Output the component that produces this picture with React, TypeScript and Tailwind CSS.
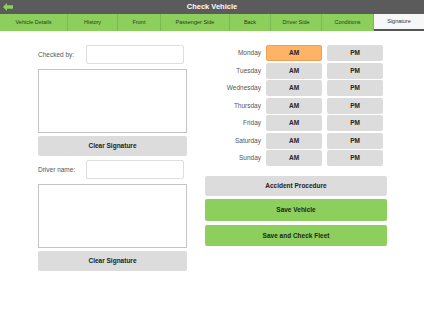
const tabs = [
  { label: 'Vehicle Details', w: 'w-[68px]' },
  { label: 'History', w: 'w-[50px]' },
  { label: 'Front', w: 'w-[43px]' },
  { label: 'Passenger Side', w: 'w-[69px]' },
  { label: 'Back', w: 'w-[41px]' },
  { label: 'Driver Side', w: 'w-[51px]' },
  { label: 'Conditions', w: 'w-[52px]' },
];

const days = ['Monday', 'Tuesday', 'Wednesday', 'Thursday', 'Friday', 'Saturday', 'Sunday'];

const SignatureBlock = ({ label, top }: { label: string; top: string }) => (
  <div className={`flex flex-col ${top}`}>
    <div className="flex items-center h-[19px]">
      <span className="w-[48px] text-[6.5px] text-[#555]">{label}</span>
      <div className="w-[98px] h-[19px] border border-[#dedede] rounded-[2px] bg-white" />
    </div>
    {/* signature pad */}
    <div className="mt-[5px] w-[149px] h-[64px] border border-[#c4c4c4] bg-white" />
    <button className="mt-[3px] w-[149px] h-[20px] rounded-[2px] bg-[#dcdcdc] text-[6.5px] font-bold text-[#222]">
      Clear Signature
    </button>
  </div>
);

export default function App() {
  return (
    <div className="w-[424px] h-[310px] bg-white overflow-hidden" style={{ fontFamily: '"Liberation Sans", Arial, sans-serif' }}>
      {/* Title bar */}
      <div className="relative h-[14px] bg-[#5b5b5b] flex items-center justify-center">
        <svg className="absolute left-[3px] top-[3px]" width="10" height="8" viewBox="0 0 10 8">
          <path d="M0 4 L4 0 L4 2.3 L10 2.3 L10 5.7 L4 5.7 L4 8 Z" fill="#8dd05c" />
        </svg>
        <span className="text-[7.5px] font-bold text-white">Check Vehicle</span>
      </div>

      {/* Tabs */}
      <div className="flex h-[17px] bg-[#8ccf5c]">
        {tabs.map((t) => (
          <div
            key={t.label}
            className={`${t.w} h-full flex items-center justify-center border-r border-[#7cba50] text-[5.5px] text-[#2a3a20]`}
          >
            {t.label}
          </div>
        ))}
        <div className="flex-1 h-full flex items-center justify-center bg-[#f7f7f7] border-b-2 border-[#555] text-[5.5px] text-[#333]">
          Signature
        </div>
      </div>

      <div className="flex pl-[38px] pt-[14px] gap-[18px]">
        {/* Left column */}
        <div className="flex flex-col">
          <SignatureBlock label="Checked by:" top="" />
          <SignatureBlock label="Driver name:" top="mt-[4px]" />
        </div>

        {/* Right column */}
        <div className="flex flex-col w-[182px] mt-[0px]">
          <div className="flex flex-col gap-[1.5px]">
            {days.map((d, i) => (
              <div key={d} className="flex items-center gap-[5px]">
                <span className="w-[56px] text-right text-[6.5px] text-[#555]">{d}</span>
                <button
                  className={`w-[56px] h-[16px] rounded-[2px] text-[6.5px] font-bold text-[#222] ${
                    i === 0 ? 'bg-[#ffb366] border border-[#f0a050]' : 'bg-[#dcdcdc]'
                  }`}
                >
                  AM
                </button>
                <button className="w-[56px] h-[16px] rounded-[2px] bg-[#dcdcdc] text-[6.5px] font-bold text-[#222]">
                  PM
                </button>
              </div>
            ))}
          </div>
          <button className="mt-[10px] h-[20px] rounded-[2px] bg-[#dcdcdc] text-[6.5px] font-bold text-[#222]">
            Accident Procedure
          </button>
          <button className="mt-[3px] h-[22px] rounded-[2px] bg-[#8ccf5c] text-[6.5px] font-bold text-[#222]">
            Save Vehicle
          </button>
          <button className="mt-[4px] h-[21px] rounded-[2px] bg-[#8ccf5c] text-[6.5px] font-bold text-[#222]">
            Save and Check Fleet
          </button>
        </div>
      </div>
    </div>
  );
}
